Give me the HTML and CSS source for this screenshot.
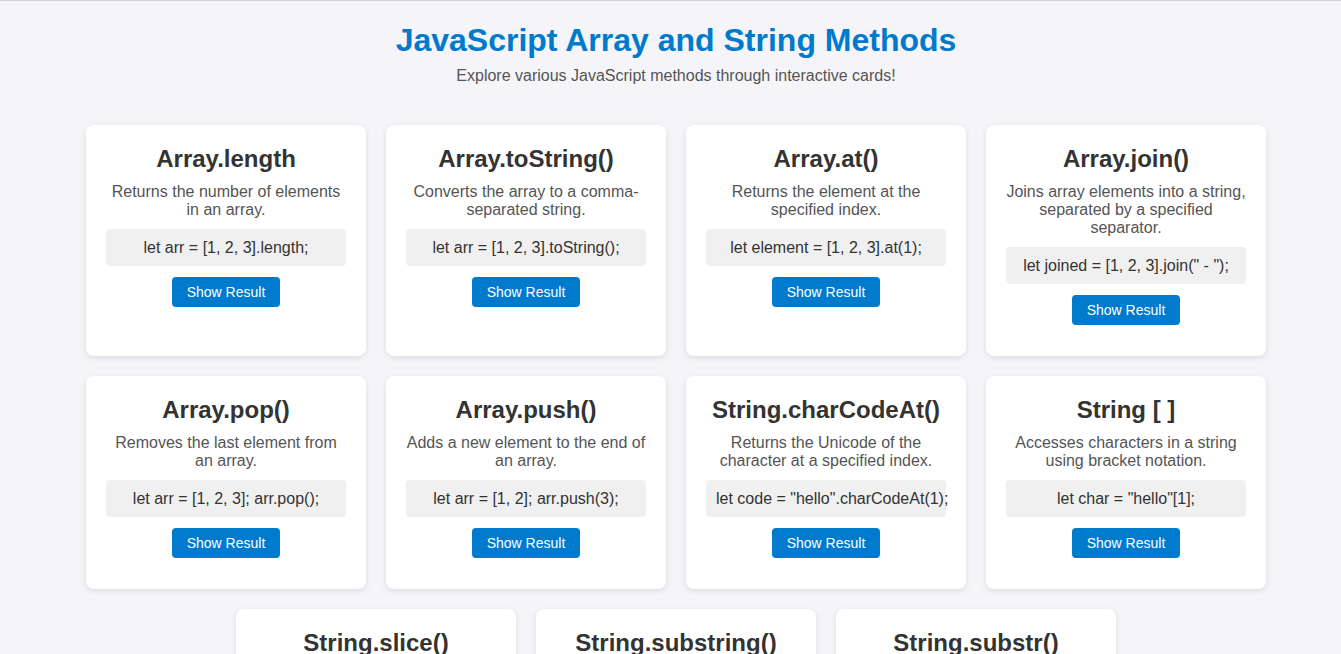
FILE: index.html
```html
<!DOCTYPE html>
<html lang="en">
<head>
<meta charset="UTF-8">
<title>JavaScript Array and String Methods</title>
<link rel="stylesheet" href="styles.css">
</head>
<body>
<header class="header">
  <h1 class="title">JavaScript Array and String Methods</h1>
  <p class="subtitle">Explore various JavaScript methods through interactive cards!</p>
</header>
<main class="cards">
  <div class="card">
    <h2 class="card-title">Array.length</h2>
    <p class="card-desc">Returns the number of elements in an array.</p>
    <div class="code">let arr = [1, 2, 3].length;</div>
    <button class="btn">Show Result</button>
  </div>
  <div class="card">
    <h2 class="card-title">Array.toString()</h2>
    <p class="card-desc">Converts the array to a comma-separated string.</p>
    <div class="code">let arr = [1, 2, 3].toString();</div>
    <button class="btn">Show Result</button>
  </div>
  <div class="card">
    <h2 class="card-title">Array.at()</h2>
    <p class="card-desc">Returns the element at the specified index.</p>
    <div class="code">let element = [1, 2, 3].at(1);</div>
    <button class="btn">Show Result</button>
  </div>
  <div class="card">
    <h2 class="card-title">Array.join()</h2>
    <p class="card-desc">Joins array elements into a string, separated by a specified separator.</p>
    <div class="code">let joined = [1, 2, 3].join(" - ");</div>
    <button class="btn">Show Result</button>
  </div>
  <div class="card">
    <h2 class="card-title">Array.pop()</h2>
    <p class="card-desc">Removes the last element from an array.</p>
    <div class="code">let arr = [1, 2, 3]; arr.pop();</div>
    <button class="btn">Show Result</button>
  </div>
  <div class="card">
    <h2 class="card-title">Array.push()</h2>
    <p class="card-desc">Adds a new element to the end of an array.</p>
    <div class="code">let arr = [1, 2]; arr.push(3);</div>
    <button class="btn">Show Result</button>
  </div>
  <div class="card">
    <h2 class="card-title">String.charCodeAt()</h2>
    <p class="card-desc">Returns the Unicode of the character at a specified index.</p>
    <div class="code">let code = "hello".charCodeAt(1);</div>
    <button class="btn">Show Result</button>
  </div>
  <div class="card">
    <h2 class="card-title">String [ ]</h2>
    <p class="card-desc">Accesses characters in a string using bracket notation.</p>
    <div class="code">let char = "hello"[1];</div>
    <button class="btn">Show Result</button>
  </div>
  <div class="card">
    <h2 class="card-title">String.slice()</h2>
    <p class="card-desc">Extracts a part of a string and returns it as a new string.</p>
    <div class="code">let part = "hello".slice(1, 3);</div>
    <button class="btn">Show Result</button>
  </div>
  <div class="card">
    <h2 class="card-title">String.substring()</h2>
    <p class="card-desc">Returns the part of the string between two indexes.</p>
    <div class="code">let sub = "hello".substring(1, 3);</div>
    <button class="btn">Show Result</button>
  </div>
  <div class="card">
    <h2 class="card-title">String.substr()</h2>
    <p class="card-desc">Returns a portion of the string starting at an index.</p>
    <div class="code">let sub = "hello".substr(1, 3);</div>
    <button class="btn">Show Result</button>
  </div>
</main>
</body>
</html>
```
FILE: styles.css
```css
html, body {
  margin: 0;
  padding: 0;
}
body {
  background: #f4f4f9;
  font-family: "Liberation Sans", Arial, sans-serif;
  color: #333;
  border-top: 1px solid #d2d2d6;
  padding-left: 11px;
}
.header {
  text-align: center;
  padding: 21px 0 20px;
}
.title {
  margin: 0 0 8px;
  font-size: 32px;
  font-weight: bold;
  color: #007acc;
}
.subtitle {
  margin: 0;
  font-size: 16px;
  color: #555;
}
.cards {
  display: flex;
  flex-wrap: wrap;
  justify-content: center;
  gap: 20px;
  padding: 20px 0;
}
.card {
  width: 280px;
  box-sizing: border-box;
  background: #fff;
  border-radius: 8px;
  box-shadow: 0 2px 6px rgba(0, 0, 0, 0.1);
  padding: 20px;
  text-align: center;
}
.card-title {
  margin: 0 0 10px;
  font-size: 24px;
  font-weight: bold;
  color: #333;
}
.card-desc {
  margin: 0 0 10px;
  font-size: 16px;
  color: #555;
}
.code {
  background: #f0f0f0;
  border-radius: 4px;
  padding: 9.5px 10px;
  margin: 0 0 11px;
  font-size: 16px;
  color: #333;
  white-space: nowrap;
}
.btn {
  background: #007acc;
  color: #fff;
  border: none;
  border-radius: 4px;
  padding: 7px 15px;
  font-family: "Liberation Sans", Arial, sans-serif;
  font-size: 14px;
  margin-bottom: 11px;
  cursor: pointer;
}
```
